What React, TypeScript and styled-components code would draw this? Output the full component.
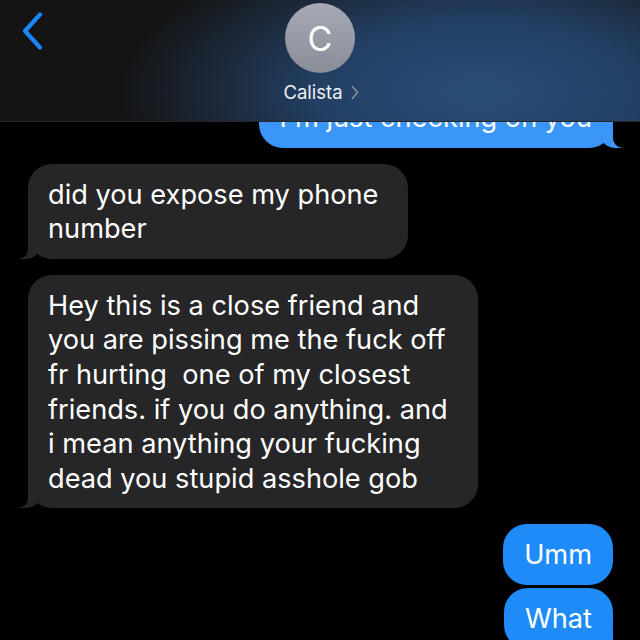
import React from "react";
import styled, { createGlobalStyle, css } from "styled-components";

const Global = createGlobalStyle`
  html, body { margin: 0; padding: 0; background: #000; }
  body { font-family: Inter, "Noto Sans", "Liberation Sans", sans-serif; }
`;

const Screen = styled.div`
  position: relative;
  width: 640px;
  height: 640px;
  overflow: hidden;
  background: #000;
`;

const Header = styled.header`
  position: absolute;
  top: 0;
  left: 0;
  right: 0;
  height: 121px;
  z-index: 2;
  background:
    radial-gradient(ellipse 360px 160px at 480px 92px, rgba(41, 77, 120, 1) 0%, rgba(36, 66, 104, 0.94) 45%, rgba(20, 20, 20, 0) 100%),
    #141414;
  border-bottom: 1px solid #262626;
  display: grid;
  grid-template-columns: 1fr auto 1fr;
  align-items: start;
`;

const BackButton = styled.div`
  padding: 11px 0 0 18px;
  display: flex;
`;

const Contact = styled.div`
  display: flex;
  flex-direction: column;
  align-items: center;
  padding-top: 3px;
  gap: 8px;
`;

const Avatar = styled.div`
  width: 70px;
  height: 70px;
  border-radius: 50%;
  background: linear-gradient(180deg, #a7aab4 0%, #898d98 100%);
  display: flex;
  align-items: center;
  justify-content: center;
  color: #fff;
  font-size: 34px;
  font-weight: 400;
`;

const Name = styled.div`
  display: flex;
  align-items: center;
  gap: 8px;
  color: #eef0f4;
  font-size: 18.5px;
  margin-left: 2px;
`;

const Thread = styled.main`
  display: flex;
  flex-direction: column;
  padding: 87px 0 0 0;
`;

const Row = styled.div<{ $me?: boolean; $gap: number }>`
  display: flex;
  justify-content: ${(p) => (p.$me ? "flex-end" : "flex-start")};
  padding: ${(p) => (p.$me ? "0 27px 0 0" : "0 0 0 28px")};
  margin-top: ${(p) => p.$gap}px;
`;

const Bubble = styled.div<{ $me?: boolean; $tail?: boolean; $light?: boolean }>`
  position: relative;
  white-space: pre-wrap;
  color: #fff;
  font-size: 27.2px;
  line-height: 34.6px;
  border-radius: 24px;
  padding: ${(p) => (p.$me ? "14px 21px 12px 21px" : "14px 30px 12px 20px")};
  background: ${(p) => (p.$me ? (p.$light ? "#3a96f8" : "#1e8bf8") : "#262628")};

  ${(p) =>
    p.$tail &&
    (p.$me
      ? css`
          &::before {
            content: "";
            position: absolute;
            bottom: 0;
            right: -9px;
            width: 22px;
            height: 22px;
            background: ${p.$light ? "#3a96f8" : "#1e8bf8"};
            border-bottom-left-radius: 16px 14px;
          }
          &::after {
            content: "";
            position: absolute;
            bottom: 0;
            right: -26px;
            width: 26px;
            height: 22px;
            background: #000;
            border-bottom-left-radius: 10px;
          }
        `
      : css`
          &::before {
            content: "";
            position: absolute;
            bottom: 0;
            left: -9px;
            width: 22px;
            height: 22px;
            background: #262628;
            border-bottom-right-radius: 16px 14px;
          }
          &::after {
            content: "";
            position: absolute;
            bottom: 0;
            left: -26px;
            width: 26px;
            height: 22px;
            background: #000;
            border-bottom-right-radius: 10px;
          }
        `)}
`;

const BubbleText = styled.span`
  position: relative;
  z-index: 1;
`;

type Msg = { text: string; me?: boolean; tail?: boolean; gap: number; light?: boolean };

const messages: Msg[] = [
  { text: "I'm just checking on you", me: true, tail: true, gap: 0, light: true },
  { text: "did you expose my phone\nnumber", tail: true, gap: 16 },
  {
    text:
      "Hey this is a close friend and\nyou are pissing me the fuck off\nfr hurting  one of my closest\nfriends. if you do anything. and\ni mean anything your fucking\ndead you stupid asshole gob",
    tail: true,
    gap: 16,
  },
  { text: "Umm", me: true, gap: 16 },
  { text: "What", me: true, tail: true, gap: 3 },
];

export default function App() {
  return (
    <>
      <Global />
      <Screen>
        <Header>
          <BackButton>
            <svg width="28" height="40" viewBox="0 0 28 40" fill="none">
              <path d="M22 3.5 L7 20 L22 36.5" stroke="#1a86fb" strokeWidth="4.2" strokeLinecap="round" strokeLinejoin="round" />
            </svg>
          </BackButton>
          <Contact>
            <Avatar>C</Avatar>
            <Name>
              Calista
              <svg width="8" height="15" viewBox="0 0 8 15" fill="none">
                <path d="M1.5 1.5 L6.5 7.5 L1.5 13.5" stroke="#8e9096" strokeWidth="1.5" strokeLinecap="round" strokeLinejoin="round" />
              </svg>
            </Name>
          </Contact>
          <div />
        </Header>
        <Thread>
          {messages.map((m, i) => (
            <Row key={i} $me={m.me} $gap={m.gap}>
              <Bubble $me={m.me} $tail={m.tail} $light={m.light}>
                <BubbleText>{m.text}</BubbleText>
              </Bubble>
            </Row>
          ))}
        </Thread>
      </Screen>
    </>
  );
}
